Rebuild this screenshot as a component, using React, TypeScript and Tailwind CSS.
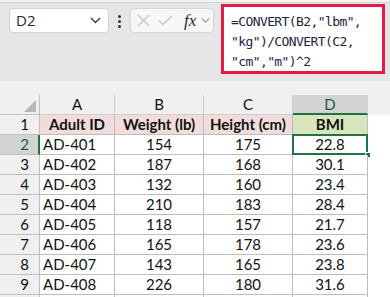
const rows = [
  ["AD-401", "154", "175", "22.8"],
  ["AD-402", "187", "168", "30.1"],
  ["AD-403", "132", "160", "23.4"],
  ["AD-404", "210", "183", "28.4"],
  ["AD-405", "118", "157", "21.7"],
  ["AD-406", "165", "178", "23.6"],
  ["AD-407", "143", "165", "23.8"],
  ["AD-408", "226", "180", "31.6"],
];

const cellFont = { fontFamily: "Lato, 'Open Sans', sans-serif" };

const Chevron = ({ className }: { className?: string }) => (
  <svg width="11" height="7" viewBox="0 0 11 7" className={className}>
    <polyline points="1,1 5.5,5.5 10,1" fill="none" stroke="currentColor" strokeWidth="1.3" />
  </svg>
);

const Toolbar = () => (
  <div>
    <div className="h-[3px] bg-[#f3f3f3] border-b border-[#d4d4d4]" />
    <div className="h-[78px] bg-[#e6e6e6] flex items-start pl-[9px]">
      <div className="mt-[5px] w-[100px] h-[25px] bg-white rounded-[4px] border border-[#d2d2d2] flex items-center pl-[6px] pr-[7px]">
        <span className="text-[15px] text-[#1c2a3a] flex-1" style={{ fontFamily: "'Open Sans', sans-serif" }}>
          D2
        </span>
        <Chevron className="text-[#333]" />
      </div>
      <div className="ml-[9px] mt-[12px] flex flex-col gap-[2px]">
        <span className="w-[3px] h-[3px] bg-[#333] rounded-full" />
        <span className="w-[3px] h-[3px] bg-[#333] rounded-full" />
        <span className="w-[3px] h-[3px] bg-[#333] rounded-full" />
      </div>
      <div className="ml-[9px] mt-[5px] w-[84px] h-[25px] bg-[#f7f7f7] rounded-[4px] border border-[#d6d6d6] flex items-center pl-[6px]">
        <svg width="13" height="13" viewBox="0 0 13 13">
          <path d="M1 1 L12 12 M12 1 L1 12" stroke="#c4c4c4" strokeWidth="1.3" />
        </svg>
        <svg width="15" height="11" viewBox="0 0 15 11" className="ml-[8px]">
          <polyline points="1,5.5 5,9.5 14,1" fill="none" stroke="#c4c4c4" strokeWidth="1.3" />
        </svg>
        <span
          className="ml-[11px] text-[17px] italic text-[#2b2b2b] leading-none"
          style={{ fontFamily: "'Liberation Serif', serif" }}
        >
          fx
        </span>
        <Chevron className="ml-[5px] text-[#9a9a9a] w-[9px]" />
      </div>
      <div
        className="ml-[7px] mt-[1px] w-[164px] h-[70px] bg-white border-[3px] border-[#e31b47] pl-[7px] pt-[5px] text-[13px] tracking-[-0.6px] leading-[20px] text-[#1b2440]"
        style={{ fontFamily: "'DejaVu Sans Mono', monospace" }}
      >
        <div>=CONVERT(B2,"lbm",</div>
        <div>"kg")/CONVERT(C2,</div>
        <div>"cm","m")^2</div>
      </div>
    </div>
    <div className="h-[14px] bg-[#f0f0f0]" />
  </div>
);

const Sheet = () => (
  <div className="grid grid-cols-[40px_75px_89px_89px_75px_1fr] text-[15px] text-[#111]" style={cellFont}>
    {/* column header row */}
    <div className="h-[20px] bg-[#f0f0f0] border-r border-b border-[#bfbfbf] relative">
      <svg width="12" height="12" viewBox="0 0 12 12" className="absolute right-[3px] bottom-[2px]">
        <polygon points="12,0 12,12 0,12" fill="#b8b8b8" />
      </svg>
    </div>
    {["A", "B", "C"].map((c) => (
      <div key={c} className="h-[20px] bg-[#f0f0f0] border-r border-b border-[#cfcfcf] flex items-center justify-center">
        {c}
      </div>
    ))}
    <div className="h-[20px] bg-[#d3d3d3] border-r border-[#cfcfcf] border-b-2 border-b-[#217346] flex items-center justify-center text-[#1d5a3c]">
      D
    </div>
    <div className="h-[20px] bg-[#f0f0f0]" />

    {/* row 1 */}
    <div className="h-[20px] bg-[#f0f0f0] border-r border-b border-[#bfbfbf] flex items-center justify-end pr-[10px]">1</div>
    {["Adult ID", "Weight (lb)", "Height (cm)"].map((h) => (
      <div key={h} className="h-[20px] bg-[#f2dcdb] border-r border-b border-[#bdbdbd] flex items-center justify-center font-bold">
        {h}
      </div>
    ))}
    <div className="h-[20px] bg-[#d8e4bc] border-r border-b border-[#bdbdbd] flex items-center justify-center font-bold">BMI</div>
    <div className="h-[20px] bg-white" />

    {rows.map((r, i) => {
      const sel = i === 0;
      return (
        <div key={r[0]} className="contents">
          <div
            className={
              sel
                ? "h-[20px] bg-[#d3d3d3] border-r-2 border-r-[#217346] border-b border-b-[#bfbfbf] flex items-center justify-end pr-[9px] text-[#1d5a3c]"
                : "h-[20px] bg-[#f0f0f0] border-r border-b border-[#bfbfbf] flex items-center justify-end pr-[10px]"
            }
          >
            {i + 2}
          </div>
          <div className="h-[20px] bg-white border-r border-b border-[#bdbdbd] flex items-center pl-[3px]">{r[0]}</div>
          <div className="h-[20px] bg-white border-r border-b border-[#bdbdbd] flex items-center justify-center">{r[1]}</div>
          <div className="h-[20px] bg-white border-r border-b border-[#bdbdbd] flex items-center justify-center">{r[2]}</div>
          <div className="h-[20px] bg-white border-r border-b border-[#bdbdbd] flex items-center justify-center relative">
            {r[3]}
            {sel && (
              <>
                <div className="absolute -left-[1px] -top-[1px] -right-[1px] -bottom-[1px] border-2 border-[#217346]" />
                <div className="absolute -right-[4px] -bottom-[4px] w-[6px] h-[6px] bg-[#217346] border border-white" />
              </>
            )}
          </div>
          <div className="h-[20px] bg-white" />
        </div>
      );
    })}
    <div className="h-[20px] bg-[#f0f0f0] border-r border-[#bfbfbf]" />
    <div className="h-[20px] bg-white border-r border-[#bdbdbd]" />
    <div className="h-[20px] bg-white border-r border-[#bdbdbd]" />
    <div className="h-[20px] bg-white border-r border-[#bdbdbd]" />
    <div className="h-[20px] bg-white border-r border-[#bdbdbd]" />
    <div className="h-[20px] bg-white" />
  </div>
);

export default function App() {
  return (
    <div className="w-[390px] h-[297px] overflow-hidden bg-white">
      <Toolbar />
      <Sheet />
    </div>
  );
}
